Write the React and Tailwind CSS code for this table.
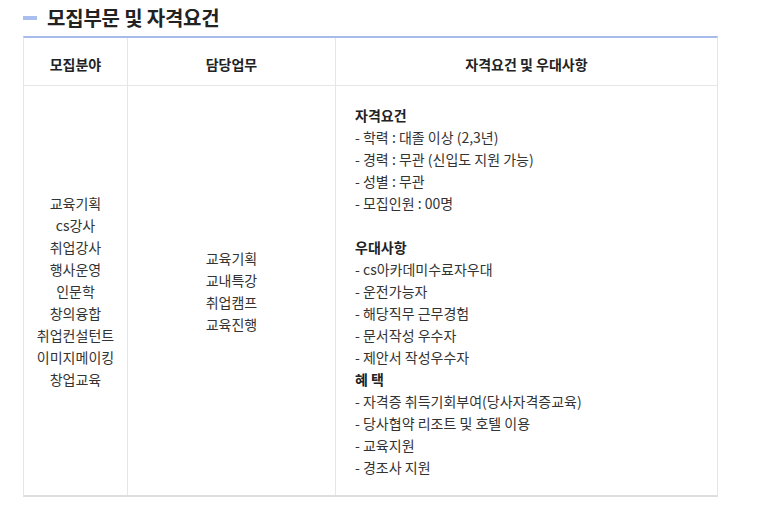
export default function App() {
  const left = ["교육기획", "cs강사", "취업강사", "행사운영", "인문학", "창의융합", "취업컨설턴트", "이미지메이킹", "창업교육"];
  const mid = ["교육기획", "교내특강", "취업캠프", "교육진행"];
  const right = [
    { t: "자격요건", b: true },
    { t: "- 학력 : 대졸 이상 (2,3년)" },
    { t: "- 경력 : 무관 (신입도 지원 가능)" },
    { t: "- 성별 : 무관" },
    { t: "- 모집인원 : 00명" },
    { t: "\u00a0" },
    { t: "우대사항", b: true },
    { t: "- cs아카데미수료자우대" },
    { t: "- 운전가능자" },
    { t: "- 해당직무 근무경험" },
    { t: "- 문서작성 우수자" },
    { t: "- 제안서 작성우수자" },
    { t: "혜 택", b: true },
    { t: "- 자격증 취득기회부여(당사자격증교육)" },
    { t: "- 당사협약 리조트 및 호텔 이용" },
    { t: "- 교육지원" },
    { t: "- 경조사 지원" },
  ];
  return (
    <div className="w-[764px] h-[526px] bg-white text-[#333]" style={{ fontFamily: '"Noto Sans CJK KR", "Noto Sans", sans-serif' }}>
      <div className="flex items-center h-[36px] pl-[23px]">
        <div className="w-[14px] h-[4px] bg-[#a9bff0] mt-[-1px]"></div>
        <div className="ml-[10px] text-[20px] font-bold text-[#222] leading-[24px] mt-[-1px] tracking-[-0.2px]">모집부문 및 자격요건</div>
      </div>
      <div className="ml-[23px] w-[695px] border-t-2 border-t-[#a6bbec] border-l border-r border-[#e6e6e6] border-b-2 border-b-[#dedede]">
        <div className="grid grid-cols-[104px_208px_1fr] border-b border-[#e6e6e6] h-[48px] text-[14px] font-semibold text-[#222]">
          <div className="flex items-center justify-center pt-[5px] border-r border-[#e6e6e6]">모집분야</div>
          <div className="flex items-center justify-center pt-[5px] border-r border-[#e6e6e6]">담당업무</div>
          <div className="flex items-center justify-center pt-[5px]">자격요건 및 우대사항</div>
        </div>
        <div className="grid grid-cols-[104px_208px_1fr] h-[409px] text-[14px] leading-[22px]">
          <div className="flex flex-col items-center justify-center border-r border-[#e6e6e6]">
            {left.map((s, i) => <div key={i}>{s}</div>)}
          </div>
          <div className="flex flex-col items-center justify-center border-r border-[#e6e6e6]">
            {mid.map((s, i) => <div key={i}>{s}</div>)}
          </div>
          <div className="flex flex-col justify-center pl-[19px]">
            {right.map((r, i) => (
              <div key={i} className={r.b ? "font-bold text-[#222]" : ""}>{r.t}</div>
            ))}
          </div>
        </div>
      </div>
    </div>
  );
}
